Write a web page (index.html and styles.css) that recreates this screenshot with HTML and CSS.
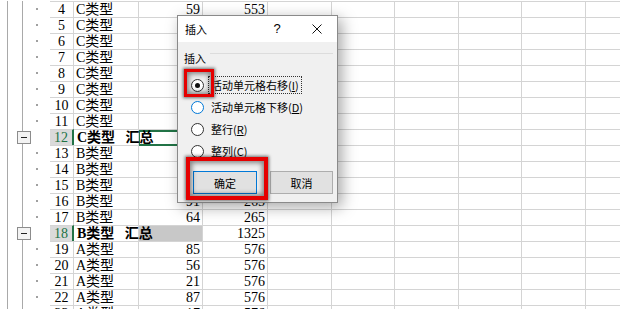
FILE: index.html
```html
<!DOCTYPE html>
<html>
<head>
    <meta charset="UTF-8">
    <title>插入</title>
    <link rel="stylesheet" href="styles.css">
</head>
<body>
    <div class="sheet">
        <div class="row"><div class="ol"><span class="dot"></span></div><div class="rh">4</div><div class="c ca">C类型</div><div class="c cb">59</div><div class="c cc">553</div><div class="rest"></div></div>
        <div class="row"><div class="ol"><span class="dot"></span></div><div class="rh">5</div><div class="c ca">C类型</div><div class="c cb">48</div><div class="c cc">553</div><div class="rest"></div></div>
        <div class="row"><div class="ol"><span class="dot"></span></div><div class="rh">6</div><div class="c ca">C类型</div><div class="c cb">72</div><div class="c cc">553</div><div class="rest"></div></div>
        <div class="row"><div class="ol"><span class="dot"></span></div><div class="rh">7</div><div class="c ca">C类型</div><div class="c cb">33</div><div class="c cc">553</div><div class="rest"></div></div>
        <div class="row"><div class="ol"><span class="dot"></span></div><div class="rh">8</div><div class="c ca">C类型</div><div class="c cb">90</div><div class="c cc">553</div><div class="rest"></div></div>
        <div class="row"><div class="ol"><span class="dot"></span></div><div class="rh">9</div><div class="c ca">C类型</div><div class="c cb">17</div><div class="c cc">553</div><div class="rest"></div></div>
        <div class="row"><div class="ol"><span class="dot"></span></div><div class="rh">10</div><div class="c ca">C类型</div><div class="c cb">64</div><div class="c cc">553</div><div class="rest"></div></div>
        <div class="row"><div class="ol"><span class="dot"></span></div><div class="rh">11</div><div class="c ca">C类型</div><div class="c cb">25</div><div class="c cc">553</div><div class="rest"></div></div>
        <div class="row sum"><div class="ol"><span class="minus"></span></div><div class="rh">12</div><div class="c ca">C类型 汇总</div><div class="c cb sel"></div><div class="c cc">6083</div><div class="rest"></div></div>
        <div class="row"><div class="ol"><span class="dot"></span></div><div class="rh">13</div><div class="c ca">B类型</div><div class="c cb">42</div><div class="c cc">265</div><div class="rest"></div></div>
        <div class="row"><div class="ol"><span class="dot"></span></div><div class="rh">14</div><div class="c ca">B类型</div><div class="c cb">76</div><div class="c cc">265</div><div class="rest"></div></div>
        <div class="row"><div class="ol"><span class="dot"></span></div><div class="rh">15</div><div class="c ca">B类型</div><div class="c cb">38</div><div class="c cc">265</div><div class="rest"></div></div>
        <div class="row"><div class="ol"><span class="dot"></span></div><div class="rh">16</div><div class="c ca">B类型</div><div class="c cb">91</div><div class="c cc">265</div><div class="rest"></div></div>
        <div class="row"><div class="ol"><span class="dot"></span></div><div class="rh">17</div><div class="c ca">B类型</div><div class="c cb">64</div><div class="c cc">265</div><div class="rest"></div></div>
        <div class="row sum"><div class="ol"><span class="minus"></span></div><div class="rh">18</div><div class="c ca">B类型 汇总</div><div class="c cb hl"></div><div class="c cc">1325</div><div class="rest"></div></div>
        <div class="row"><div class="ol"><span class="dot"></span></div><div class="rh">19</div><div class="c ca">A类型</div><div class="c cb">85</div><div class="c cc">576</div><div class="rest"></div></div>
        <div class="row"><div class="ol"><span class="dot"></span></div><div class="rh">20</div><div class="c ca">A类型</div><div class="c cb">56</div><div class="c cc">576</div><div class="rest"></div></div>
        <div class="row"><div class="ol"><span class="dot"></span></div><div class="rh">21</div><div class="c ca">A类型</div><div class="c cb">21</div><div class="c cc">576</div><div class="rest"></div></div>
        <div class="row"><div class="ol"><span class="dot"></span></div><div class="rh">22</div><div class="c ca">A类型</div><div class="c cb">87</div><div class="c cc">576</div><div class="rest"></div></div>
        <div class="row"><div class="ol"><span class="dot"></span></div><div class="rh">23</div><div class="c ca">A类型</div><div class="c cb">17</div><div class="c cc">576</div><div class="rest"></div></div>
    </div>

    <div class="dialog">
        <div class="titlebar">
            <span class="title">插入</span>
            <span class="help">?</span>
            <span class="close">
                <svg width="10" height="10" viewBox="0 0 10 10"><path d="M0.5 0.5L9.5 9.5M9.5 0.5L0.5 9.5" stroke="#111" stroke-width="1" fill="none"/></svg>
            </span>
        </div>
        <div class="dbody">
            <div class="group-head"><span>插入</span><span class="rule"></span></div>
            <div class="options">
                <div class="opt"><span class="radio on"></span><span class="lbl focus">活动单元格右移(<u>I</u>)</span></div>
                <div class="opt"><span class="radio hover"></span><span class="lbl">活动单元格下移(<u>D</u>)</span></div>
                <div class="opt"><span class="radio"></span><span class="lbl">整行(<u>R</u>)</span></div>
                <div class="opt"><span class="radio"></span><span class="lbl">整列(<u>C</u>)</span></div>
            </div>
            <div class="btns">
                <button class="ok">确定</button>
                <button class="cancel">取消</button>
            </div>
        </div>
    </div>

    <div class="mark mark-radio"></div>
    <div class="mark mark-ok"></div>
</body>
</html>
```

FILE: styles.css
```css
body {
    margin: 0;
    height: 309px;
    overflow: hidden;
    position: relative;
    background-color: #fff;
    color: #000;
    font-family: "Liberation Serif", "Noto Sans CJK SC", serif;
    font-size: 14px;
}
.sheet {
    padding-top: 1px;
}
.row {
    display: flex;
    height: 16px;
}
.row > div {
    flex: none;
    height: 16px;
    box-sizing: border-box;
    border-top: 1px solid #d4d4d4;
}
/* outline pane with the group brackets */
.row > .ol {
    width: 50px;
    border-top: 0;
    display: flex;
    align-items: center;
    background:
        linear-gradient(#a9a9a9, #a9a9a9) 7px 0 / 1px 100% no-repeat,
        linear-gradient(#a9a9a9, #a9a9a9) 22px 0 / 1px 100% no-repeat;
}
.dot {
    margin-left: 36px;
    width: 2px;
    height: 2px;
    background-color: #a0a0a0;
}
.minus {
    margin-left: 17px;
    width: 14px;
    height: 13px;
    box-sizing: border-box;
    border: 1px solid #8c8c8c;
    background-color: #f3f3f3;
    display: flex;
    align-items: center;
    justify-content: center;
}
.minus::before {
    content: "";
    width: 6px;
    height: 1px;
    background-color: #222;
}
.rh {
    width: 24px;
    border-right: 1px solid #d4d4d4;
    text-align: center;
    line-height: 15px;
}
.c {
    padding: 0 2px;
    line-height: 15px;
    white-space: nowrap;
    border-right: 1px solid #d4d4d4;
}
.ca {
    width: 65px;
    position: relative;
    z-index: 1;
}
.cb {
    width: 64px;
    text-align: right;
}
.cc {
    width: 65px;
    text-align: right;
}
.row > .rest {
    flex: 1;
    background:
        linear-gradient(#d4d4d4, #d4d4d4) 63px 0 / 1px 100% no-repeat,
        linear-gradient(#d4d4d4, #d4d4d4) 126px 0 / 1px 100% no-repeat,
        linear-gradient(#d4d4d4, #d4d4d4) 190px 0 / 1px 100% no-repeat,
        linear-gradient(#d4d4d4, #d4d4d4) 253px 0 / 1px 100% no-repeat,
        linear-gradient(#d4d4d4, #d4d4d4) 317px 0 / 1px 100% no-repeat;
}
.sum .ca {
    font-weight: bold;
    padding-left: 3px;
    word-spacing: 7px;
}
.sum .rh {
    background-color: #dadada;
    color: #217346;
    border-right: 2px solid #217346;
}
.sel {
    position: relative;
}
.sel::after {
    content: "";
    position: absolute;
    left: -1px;
    top: 0;
    right: 0;
    bottom: -1px;
    border: 2px solid #217346;
}
.hl {
    background-color: #c8c8c8;
}

/* Insert dialog */
.dialog {
    position: absolute;
    left: 177px;
    top: 15px;
    width: 161px;
    height: 188px;
    box-sizing: border-box;
    border: 1px solid #8a8a8a;
    background-color: #f0f0f0;
    box-shadow: 4px 4px 14px rgba(0, 0, 0, 0.35);
    font-family: "Noto Sans CJK SC", "Liberation Sans", sans-serif;
    font-size: 11px;
    line-height: 16px;
}
.titlebar {
    height: 26px;
    display: flex;
    align-items: center;
    padding: 0 5px 0 7px;
    background-color: #fff;
}
.help {
    margin-left: auto;
    width: 20px;
    text-align: center;
    font-family: "Liberation Sans", sans-serif;
    font-size: 13px;
}
.close {
    width: 30px;
    margin-left: 15px;
    display: flex;
    justify-content: center;
}
.dbody {
    padding: 8px 4px 0 6px;
}
.group-head {
    display: flex;
    align-items: center;
    height: 16px;
}
.rule {
    flex: 1;
    align-self: flex-start;
    margin: 3px 0 0 4px;
    border-top: 1px solid #dcdcdc;
}
.options {
    margin-top: 8px;
}
.opt {
    display: flex;
    align-items: center;
    height: 22px;
    padding-left: 7px;
}
.radio {
    width: 13px;
    height: 13px;
    box-sizing: border-box;
    border: 1px solid #333;
    border-radius: 50%;
    background-color: #fff;
    display: flex;
    align-items: center;
    justify-content: center;
}
.radio.on::after {
    content: "";
    width: 5px;
    height: 5px;
    border-radius: 50%;
    background-color: #111;
}
.radio.hover {
    border-color: #0078d7;
}
.lbl {
    margin-left: 4px;
    padding: 0 2px;
    border: 1px solid transparent;
}
.lbl.focus {
    border: 1px dotted #333;
}
.btns {
    display: flex;
    gap: 13px;
    margin-top: 9px;
    padding-left: 9px;
}
button {
    width: 64px;
    height: 23px;
    padding: 0;
    border: 1px solid #adadad;
    background-color: #e1e1e1;
    font: inherit;
    color: #000;
}
.ok {
    border-color: #0078d7;
}
.cancel {
    width: 63px;
}

/* red callouts */
.mark {
    position: absolute;
    box-sizing: border-box;
    border: 3px solid #e50000;
    box-shadow: 0 0 3px 1px rgba(0, 0, 0, 0.55), inset 0 0 5px 2px rgba(0, 0, 0, 0.45);
}
.mark-radio {
    left: 184px;
    top: 69px;
    width: 30px;
    height: 28px;
}
.mark-ok {
    left: 186px;
    top: 157px;
    width: 82px;
    height: 43px;
    border-width: 4px;
}
```
